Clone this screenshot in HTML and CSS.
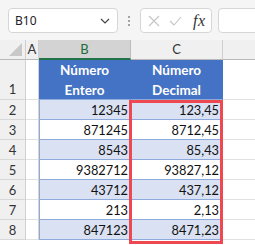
FILE: index.html
```html
<!DOCTYPE html>
<html>
<head>
<meta charset="utf-8">
<link rel="stylesheet" href="styles.css">
</head>
<body>
<div class="toolbar">
  <div class="namebox">
    <span class="nb-text">B10</span>
    <svg class="chev" width="10" height="6" viewBox="0 0 10 6"><path d="M1 1 L5 5 L9 1" fill="none" stroke="#444" stroke-width="1.2"/></svg>
  </div>
  <div class="dots">
    <svg width="4" height="12" viewBox="0 0 4 12"><circle cx="2" cy="2" r="1" fill="#888"/><circle cx="2" cy="6" r="1" fill="#888"/><circle cx="2" cy="10" r="1" fill="#888"/></svg>
  </div>
  <div class="fxbox">
    <svg width="12" height="12" viewBox="0 0 12 12"><path d="M1 1 L11 11 M11 1 L1 11" stroke="#c4c4c4" stroke-width="1.1"/></svg>
    <svg width="13" height="10" viewBox="0 0 13 10"><path d="M1 5 L5 9 L12 1" fill="none" stroke="#c4c4c4" stroke-width="1.1"/></svg>
    <span class="fx">fx</span>
  </div>
  <div class="formula"></div>
</div>
<div class="sheet">
  <div class="ch corner"><svg width="13" height="13" viewBox="0 0 13 13"><path d="M13 0 L13 13 L0 13 Z" fill="#c8c8c8"/></svg></div>
  <div class="ch">A</div>
  <div class="ch sel-col">B</div>
  <div class="ch">C</div>
  <div class="ch last"></div>

  <div class="rh tall">1</div>
  <div class="c a tall"></div>
  <div class="c th">Número<br>Entero</div>
  <div class="c th">Número<br>Decimal</div>
  <div class="c d tall"></div>

  <div class="rh">2</div><div class="c a"></div><div class="c n band">12345</div><div class="c n band">123,45</div><div class="c d"></div>
  <div class="rh">3</div><div class="c a"></div><div class="c n">871245</div><div class="c n">8712,45</div><div class="c d"></div>
  <div class="rh">4</div><div class="c a"></div><div class="c n band">8543</div><div class="c n band">85,43</div><div class="c d"></div>
  <div class="rh">5</div><div class="c a"></div><div class="c n">9382712</div><div class="c n">93827,12</div><div class="c d"></div>
  <div class="rh">6</div><div class="c a"></div><div class="c n band">43712</div><div class="c n band">437,12</div><div class="c d"></div>
  <div class="rh">7</div><div class="c a"></div><div class="c n">213</div><div class="c n">2,13</div><div class="c d"></div>
  <div class="rh">8</div><div class="c a"></div><div class="c n band">847123</div><div class="c n band">8471,23</div><div class="c d"></div>

  <div class="selbox"></div>
</div>
</body>
</html>
```

FILE: styles.css
```css
html, body {
  margin: 0;
  padding: 0;
  background: #ffffff;
  overflow: hidden;
}
body {
  width: 255px;
  height: 245px;
  font-family: Lato, "Liberation Sans", sans-serif;
}
.toolbar {
  height: 40px;
  background: #f5f5f5;
  display: flex;
  align-items: flex-start;
  padding: 8px 0 0 8px;
  box-sizing: border-box;
  overflow: hidden;
  white-space: nowrap;
}
.namebox {
  width: 110px;
  height: 25px;
  box-sizing: border-box;
  background: #fff;
  border: 1px solid #d6d6d6;
  border-radius: 4px;
  display: flex;
  align-items: center;
  justify-content: space-between;
  padding: 0 7px 0 6px;
  flex: none;
}
.nb-text {
  font-family: "Noto Sans", sans-serif;
  font-size: 12px;
  color: #222;
}
.chev { margin-top: 1px; }
.dots {
  width: 22px;
  height: 25px;
  display: flex;
  align-items: center;
  justify-content: center;
  flex: none;
}
.fxbox {
  width: 72px;
  height: 25px;
  box-sizing: border-box;
  background: #fff;
  border: 1px solid #d6d6d6;
  border-radius: 4px;
  display: flex;
  align-items: center;
  padding: 0 5px 0 7px;
  gap: 9px;
  flex: none;
}
.fx {
  font-family: "Liberation Serif", serif;
  font-style: italic;
  font-size: 16px;
  color: #333;
  margin-left: 2px;
  letter-spacing: 0.5px;
}
.formula {
  width: 60px;
  height: 25px;
  box-sizing: border-box;
  margin-left: 6px;
  background: #fff;
  border: 1px solid #d6d6d6;
  border-radius: 4px;
  flex: none;
}
.sheet {
  position: relative;
  display: grid;
  grid-template-columns: 26px 13px 92px 92px 1fr;
  grid-template-rows: 20px 40px repeat(7, 20px) 5px;
  font-size: 12.8px;
}
.sheet > div {
  box-sizing: border-box;
}
.ch {
  background: #f0f0f0;
  border-right: 1px solid #cfcfcf;
  border-bottom: 1px solid #b8b8b8;
  text-align: center;
  line-height: 19px;
  font-size: 13px;
  color: #333;
}
.ch.last { border-right: none; }
.corner {
  display: flex;
  align-items: flex-end;
  justify-content: flex-end;
  padding: 0 3px 3px 0;
}
.corner svg { display: block; }
.ch.sel-col {
  background: #d3d3d3;
  color: #1d6b3c;
  border-bottom: 2px solid #217346;
  border-right-color: #bdbdbd;
}
.rh {
  background: #f0f0f0;
  border-right: 1px solid #cfcfcf;
  border-bottom: 1px solid #d8d8d8;
  text-align: center;
  line-height: 20px;
  font-size: 13px;
  color: #333;
}
.rh.tall {
  line-height: 20px;
  padding-top: 19px;
}
.c {
  border-bottom: 1px solid #e1e1e1;
}
.c.a {
  border-right: 1px solid #d4d4d4;
}
.c.th {
  background: #4472c4;
  color: #fff;
  font-weight: bold;
  text-align: center;
  line-height: 20px;
  font-size: 13.5px;
  border-bottom: 1px solid #8ea9db;
  border-right: 1px solid #4472c4;
}
.c.n {
  text-align: right;
  padding-right: 3px;
  line-height: 20px;
  color: #111;
  border-bottom: 1px solid #8ea9db;
  border-left: 1px solid #8ea9db;
}
.c.n + .c.n {
  border-left: none;
  border-right: 1px solid #8ea9db;
}
.c.n.band {
  background: #d9e1f2;
}
.selbox {
  position: absolute;
  left: 129px;
  top: 60px;
  width: 94px;
  height: 144px;
  border: 3px solid #ee4850;
  box-sizing: border-box;
  pointer-events: none;
}
```
